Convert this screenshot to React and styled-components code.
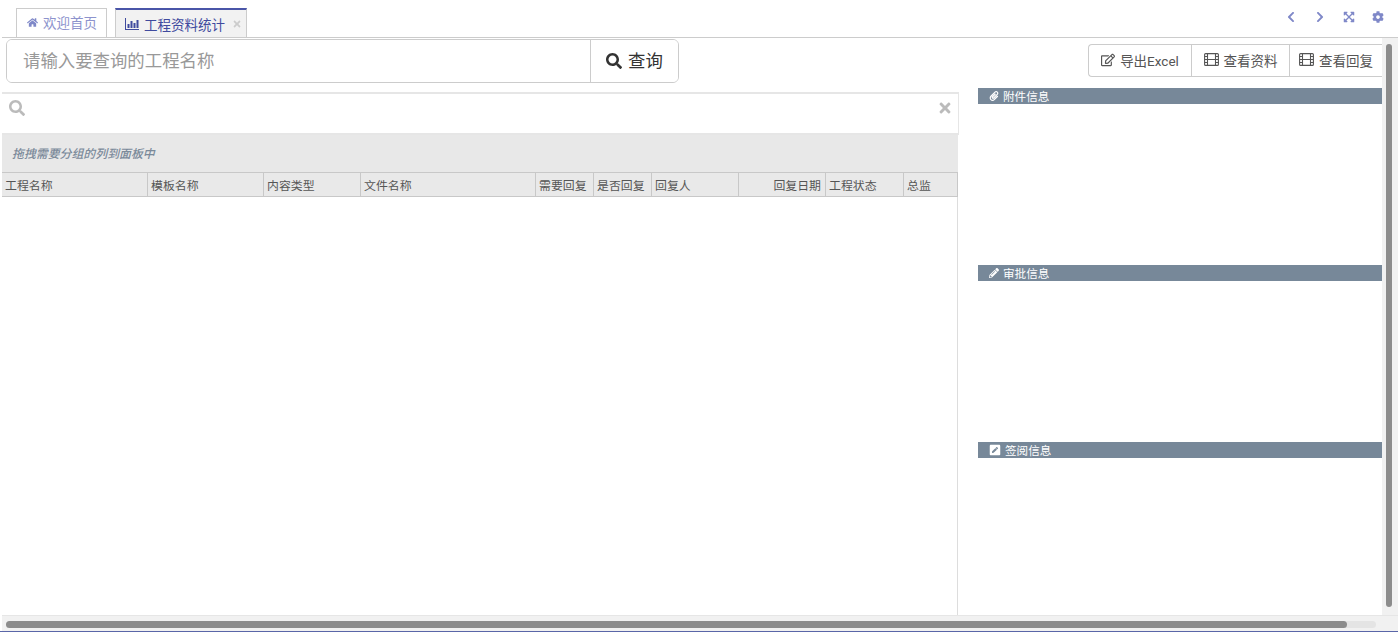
import React from "react";
import styled, { createGlobalStyle } from "styled-components";
import {
  FaHome,
  FaSearch,
  FaTimes,
  FaPaperclip,
  FaPencilAlt,
  FaPenSquare,
  FaChevronLeft,
  FaChevronRight,
  FaCog,
  FaRegEdit,
  FaExpandArrowsAlt,
} from "react-icons/fa";

const GlobalStyle = createGlobalStyle`
  html, body {
    margin: 0;
    padding: 0;
    background: #fff;
    overflow: hidden;
  }
  * { box-sizing: border-box; }
  body {
    font-family: Roboto, "Noto Sans CJK SC", sans-serif;
  }
`;

const Page = styled.div`
  width: 1398px;
  height: 632px;
  display: flex;
  flex-direction: column;
  overflow: hidden;
  border-bottom: 1px solid #5a66a8;
`;

// tabs on top
const TabBar = styled.div`
  height: 38px;
  flex: none;
  margin-left: 2px;
  padding: 8px 13px 0 14px;
  display: flex;
  justify-content: space-between;
  border-bottom: 1px solid #ccc;
`;
const Tabs = styled.div`
  display: flex;
  gap: 8px;
`;
const Tab = styled.div`
  height: 29px;
  width: ${(p) => p.$width}px;
  display: flex;
  align-items: center;
  gap: 5px;
  padding: ${(p) => (p.$active ? "0 0 0 9px" : "0 0 2px 10px")};
  font-size: 13.5px;
  white-space: nowrap;
  color: ${(p) => (p.$active ? "#3f4a9e" : "#8d93cd")};
  background: ${(p) => (p.$active ? "#f2f2f2" : "#fff")};
  border: 1px solid #ccc;
  border-top: ${(p) => (p.$active ? "2px solid #4a55a8" : "1px solid #ccc")};
  border-bottom: none;
`;
const TabClose = styled.span`
  margin-left: 2px;
  display: flex;
  color: #ccc;
  font-size: 10px;
`;
const WindowTools = styled.div`
  display: flex;
  gap: 15px;
  padding-top: 3px;
  color: #7f88c8;
`;
const ToolSlot = styled.span`
  width: 14px;
  height: 12px;
  display: flex;
  justify-content: center;
  align-items: center;
`;

const Viewport = styled.div`
  flex: 1;
  min-height: 0;
  display: flex;
`;
const Content = styled.div`
  width: 1382px;
  height: 577px;
  display: flex;
  padding-left: 2px;
  background: #fff;
`;

const LeftColumn = styled.div`
  width: 956px;
  flex: none;
  display: flex;
  flex-direction: column;
`;
const QueryRow = styled.div`
  height: 54px;
  flex: none;
  padding: 1px 0 0 4px;
`;
const QueryGroup = styled.div`
  width: 673px;
  height: 44px;
  display: flex;
  border: 1px solid #ccc;
  border-radius: 6px;
  overflow: hidden;
`;
const QueryInput = styled.input`
  flex: 1;
  min-width: 0;
  border: none;
  outline: none;
  padding: 0 0 1px 16px;
  font: 17.4px Roboto, "Noto Sans CJK SC", sans-serif;
  &::placeholder {
    color: #999;
    opacity: 1;
  }
`;
const QueryButton = styled.button`
  width: 88px;
  flex: none;
  display: flex;
  align-items: center;
  justify-content: center;
  gap: 6px;
  background: #fff;
  border: none;
  border-left: 1px solid #ccc;
  padding: 0 0 3px;
  font: 17.4px Roboto, "Noto Sans CJK SC", sans-serif;
  color: #333;
`;
const QueryIcon = styled(FaSearch)`
  margin-top: 3px;
`;

const GridSearch = styled.div`
  height: 43px;
  flex: none;
  width: 957px;
  display: flex;
  justify-content: space-between;
  padding: 6px 5px 0 7px;
  border: 2px solid #e6e6e6;
  border-left: none;
  border-right-width: 1px;
  color: #bbb;
  font-size: 16px;
`;
const GroupPanel = styled.div`
  height: 38px;
  flex: none;
  display: flex;
  align-items: center;
  padding: 0 0 2px 10px;
  background: #e8e8e8;
  border-bottom: 1px solid #c8c8c8;
  font-size: 11.9px;
  font-style: italic;
  font-weight: 500;
  color: #7b8a9a;
`;
const HeaderRow = styled.div`
  height: 24px;
  flex: none;
  display: grid;
  grid-template-columns: 146px 116px 97px 175px 58px 58px 87px 87px 78px 54px;
  background: #e9e9e9;
  border-bottom: 1px solid #c8c8c8;
`;
const HeaderCell = styled.div`
  display: flex;
  align-items: center;
  justify-content: ${(p) => (p.$right ? "flex-end" : "flex-start")};
  padding: 0 4px 0 3px;
  font-size: 11.9px;
  color: #555;
  white-space: nowrap;
  border-right: 1px solid #c8c8c8;
`;
const GridBody = styled.div`
  flex: 1;
  border-right: 1px solid #ddd;
`;

const RightColumn = styled.div`
  flex: 1;
  min-width: 0;
  padding-left: 20px;
  display: flex;
  flex-direction: column;
`;
const ActionRow = styled.div`
  height: 50px;
  flex: none;
  padding-top: 6px;
  display: flex;
  justify-content: flex-end;
`;
const ActionGroup = styled.div`
  height: 33px;
  display: flex;
  border: 1px solid #ccc;
  border-right: none;
  border-radius: 4px 0 0 4px;
`;
const ActionButton = styled.div`
  width: ${(p) => p.$width}px;
  display: flex;
  align-items: center;
  justify-content: center;
  gap: 5px;
  padding-bottom: 2px;
  font-size: 13.5px;
  color: #555;
  white-space: nowrap;
  border-left: ${(p) => (p.$first ? "none" : "1px solid #ccc")};
`;
const InfoSection = styled.section`
  height: 177px;
  flex: none;
`;
const InfoTitle = styled.h3`
  margin: 0;
  height: 16px;
  display: flex;
  align-items: center;
  gap: 4px;
  padding-left: 11px;
  background: #778899;
  color: #fff;
  font-size: 11.6px;
  font-weight: normal;
`;

const VerticalBar = styled.div`
  flex: 1;
  background: #f1f1f1;
  padding: 6px 6px 8px 4px;
`;
const VerticalThumb = styled.div`
  width: 6px;
  height: 563px;
  border-radius: 3px;
  background: #8c8c8c;
`;
const HorizontalBar = styled.div`
  height: 16px;
  flex: none;
  margin-left: 2px;
  padding: 5px 22px 0 4px;
  background: #f1f1f1;
  border-top: 1px solid #e6e6e6;
`;
const HorizontalTrack = styled.div`
  height: 7px;
  border-radius: 4px;
  background: #e4e4e4;
`;
const HorizontalThumb = styled.div`
  width: 1341px;
  height: 7px;
  border-radius: 4px;
  background: #8c8c8c;
`;

const BarChartIcon = () => (
  <svg width="14" height="12" viewBox="0 0 14 12" fill="currentColor">
    <path d="M0 0h1v11h13v1H0z" />
    <path d="M2.5 6h2v4h-2zM5.5 3h2v7h-2zM8.5 5h2v5h-2zM11.5 2h2v8h-2z" />
  </svg>
);

const FilmIcon = () => (
  <svg width="15" height="13" viewBox="0 0 15 13" fill="none" stroke="currentColor" strokeWidth="1.1">
    <rect x="0.6" y="0.6" width="13.8" height="11.8" rx="1" />
    <path d="M3.5 0.6v11.8M11.5 0.6v11.8M3.5 6.5h8M0.6 3.5h2.9M0.6 6.5h2.9M0.6 9.5h2.9M11.5 3.5h2.9M11.5 6.5h2.9M11.5 9.5h2.9" />
  </svg>
);

const columns = [
  { title: "工程名称" },
  { title: "模板名称" },
  { title: "内容类型" },
  { title: "文件名称" },
  { title: "需要回复" },
  { title: "是否回复" },
  { title: "回复人" },
  { title: "回复日期", right: true },
  { title: "工程状态" },
  { title: "总监" },
];

const sections = [
  { title: "附件信息", icon: <FaPaperclip size={10} /> },
  { title: "审批信息", icon: <FaPencilAlt size={10} /> },
  { title: "签阅信息", icon: <FaPenSquare size={12} /> },
];

const App = () => {
  return (
    <Page>
      <GlobalStyle />
      <TabBar>
        <Tabs>
          <Tab $width={91}>
            <FaHome size={11} color="#7f88c8" />
            欢迎首页
          </Tab>
          <Tab $width={132} $active>
            <BarChartIcon />
            工程资料统计
            <TabClose>
              <FaTimes />
            </TabClose>
          </Tab>
        </Tabs>
        <WindowTools>
          <ToolSlot><FaChevronLeft size={12} /></ToolSlot>
          <ToolSlot><FaChevronRight size={12} /></ToolSlot>
          <ToolSlot><FaExpandArrowsAlt size={12} /></ToolSlot>
          <ToolSlot><FaCog size={12} /></ToolSlot>
        </WindowTools>
      </TabBar>
      <Viewport>
        <Content>
          <LeftColumn>
            <QueryRow>
              <QueryGroup>
                <QueryInput placeholder="请输入要查询的工程名称" />
                <QueryButton>
                  <QueryIcon size={16} />
                  查询
                </QueryButton>
              </QueryGroup>
            </QueryRow>
            <GridSearch>
              <FaSearch />
              <FaTimes />
            </GridSearch>
            <GroupPanel>拖拽需要分组的列到面板中</GroupPanel>
            <HeaderRow>
              {columns.map((col) => (
                <HeaderCell key={col.title} $right={col.right}>{col.title}</HeaderCell>
              ))}
            </HeaderRow>
            <GridBody />
          </LeftColumn>
          <RightColumn>
            <ActionRow>
              <ActionGroup>
                <ActionButton $width={102} $first>
                  <FaRegEdit size={14} />
                  导出Excel
                </ActionButton>
                <ActionButton $width={98}>
                  <FilmIcon />
                  查看资料
                </ActionButton>
                <ActionButton $width={93}>
                  <FilmIcon />
                  查看回复
                </ActionButton>
              </ActionGroup>
            </ActionRow>
            {sections.map((s) => (
              <InfoSection key={s.title}>
                <InfoTitle>
                  {s.icon}
                  {s.title}
                </InfoTitle>
              </InfoSection>
            ))}
          </RightColumn>
        </Content>
        <VerticalBar>
          <VerticalThumb />
        </VerticalBar>
      </Viewport>
      <HorizontalBar>
        <HorizontalTrack>
          <HorizontalThumb />
        </HorizontalTrack>
      </HorizontalBar>
    </Page>
  );
};

export default App;
